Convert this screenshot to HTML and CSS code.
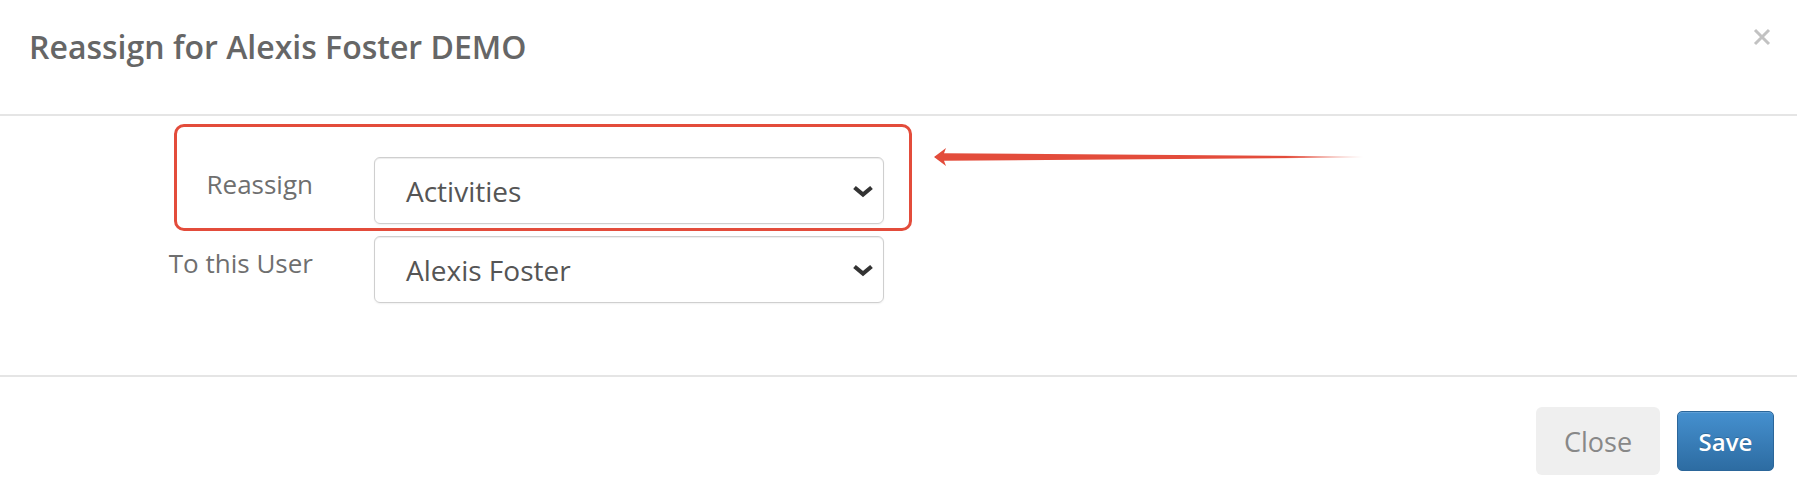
FILE: index.html
```html
<!DOCTYPE html>
<html lang="en">
<head>
<meta charset="utf-8">
<title>Reassign</title>
<link rel="stylesheet" href="styles.css">
</head>
<body>
<div class="modal">
  <div class="modal-header">
    <h4 class="modal-title">Reassign for Alexis Foster DEMO</h4>
    <button class="close" aria-label="Close">
      <svg width="18" height="18" viewBox="0 0 18 18"><path d="M2 2 L16 16 M16 2 L2 16" stroke="#c2c2c2" stroke-width="3" fill="none"/></svg>
    </button>
  </div>
  <div class="modal-body">
    <div class="form">
      <div class="row">
        <div class="label"><span>Reassign</span></div>
        <div class="select"><span>Activities</span>
          <svg class="chev" width="22" height="14" viewBox="0 0 22 14"><path d="M2.5 3.5 L11 10.5 L19.5 3.5" stroke="#333" stroke-width="4.2" fill="none"/></svg>
        </div>
      </div>
      <div class="row">
        <div class="label"><span>To this User</span></div>
        <div class="select"><span>Alexis Foster</span>
          <svg class="chev" width="22" height="14" viewBox="0 0 22 14"><path d="M2.5 3.5 L11 10.5 L19.5 3.5" stroke="#333" stroke-width="4.2" fill="none"/></svg>
        </div>
      </div>
      <div class="highlight"></div>
      <svg class="arrow" width="440" height="26" viewBox="0 0 440 26">
        <defs>
          <linearGradient id="fade" x1="0" y1="0" x2="1" y2="0">
            <stop offset="0" stop-color="#e34c3b"/>
            <stop offset="0.82" stop-color="#e34c3b"/>
            <stop offset="1" stop-color="#e34c3b" stop-opacity="0"/>
          </linearGradient>
        </defs>
        <polygon points="4,12 16,3 14,8.2 433,11.4 433,12.6 14,15.8 16,21" fill="url(#fade)"/>
      </svg>
    </div>
  </div>
  <div class="modal-footer">
    <button class="btn btn-close">Close</button>
    <button class="btn btn-save">Save</button>
  </div>
</div>
</body>
</html>
```

FILE: styles.css
```css
* { box-sizing: border-box; }
html, body { margin: 0; padding: 0; background: #fff; }
body { font-family: "Open Sans", "Liberation Sans", sans-serif; }

.modal { width: 1797px; height: 487px; background: #fff; }

.modal-header {
  height: 116px;
  padding: 27px 26px 0 29px;
  border-bottom: 2px solid #e5e5e5;
  display: flex;
  justify-content: space-between;
  align-items: flex-start;
}
.modal-title {
  margin: 0;
  font-size: 32px;
  line-height: 40px;
  font-weight: 600;
  color: #666;
}
.close {
  border: 0;
  background: none;
  padding: 0;
  margin-top: 1px;
  width: 18px;
  height: 18px;
  display: block;
}
.close svg { display: block; }

.modal-body {
  height: 261px;
  padding: 41px 0 0 160px;
  border-bottom: 2px solid #e5e5e5;
}
.form {
  position: relative;
  display: flex;
  flex-direction: column;
  gap: 12px;
}
.row {
  display: flex;
  align-items: flex-start;
  gap: 61px;
}
.label {
  width: 153px;
  flex-shrink: 0;
  display: flex;
  justify-content: flex-end;
  padding-top: 9px;
  font-size: 26px;
  line-height: 36px;
  color: #6f6f6f;
  white-space: nowrap;
}
.select {
  width: 510px;
  height: 67px;
  border: 1px solid #cfcfcf;
  border-radius: 6px;
  box-shadow: inset 0 1px 1px rgba(0,0,0,.075), 0 1px 2px rgba(0,0,0,.06);
  display: flex;
  align-items: center;
  justify-content: space-between;
  padding: 0 9px 0 31px;
  font-size: 28px;
  color: #555;
}
.chev { display: block; }

.highlight {
  position: absolute;
  left: 14px;
  top: -33px;
  width: 738px;
  height: 107px;
  border: 3px solid #e34c3b;
  border-radius: 10px;
}
.arrow {
  position: absolute;
  left: 770px;
  top: -12px;
}

.modal-footer {
  padding: 30px 23px 0 0;
  display: flex;
  justify-content: flex-end;
  align-items: center;
  gap: 17px;
}
.btn {
  font-family: "Open Sans", "Liberation Sans", sans-serif;
  border-radius: 6px;
  cursor: pointer;
}
.btn-close {
  width: 124px;
  height: 68px;
  border: 0;
  background: #efefef;
  color: #888;
  font-size: 27px;
}
.btn-save {
  width: 97px;
  height: 60px;
  border: 1px solid #2b669a;
  border-radius: 5px;
  background: linear-gradient(to bottom, #4590cf 0%, #2d6ca2 100%);
  box-shadow: inset 0 1px 0 rgba(255,255,255,.15);
  color: #fff;
  font-size: 24px;
  font-weight: 600;
  text-shadow: 0 -1px 0 rgba(0,0,0,.2);
}
```
